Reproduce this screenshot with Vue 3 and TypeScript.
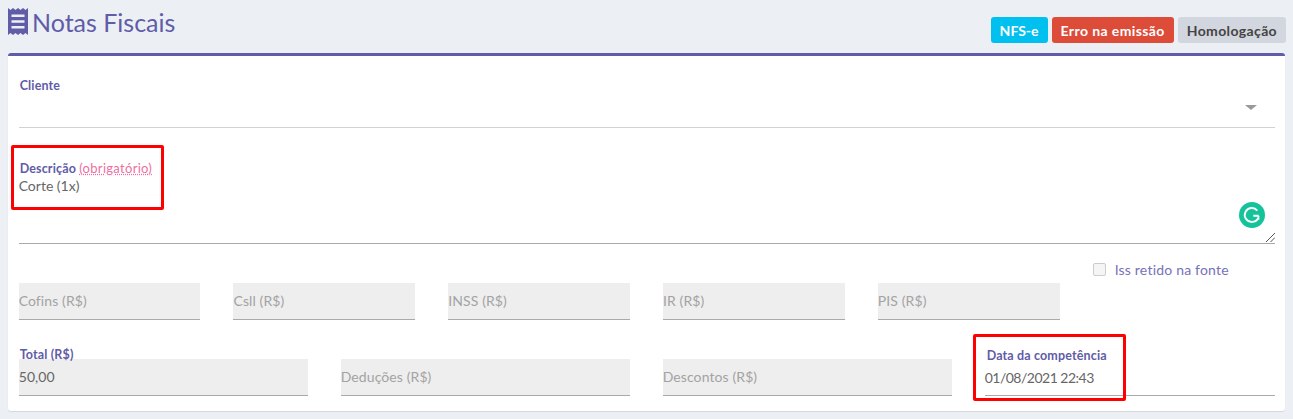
<template>
  <div class="page">
    <header class="page-header">
      <h1 class="page-title">
        <svg class="title-icon" viewBox="0 0 20 27" width="20" height="27" aria-hidden="true">
          <path
            fill-rule="evenodd"
            d="M0 0l2.500 2 2.500-2 2.500 2L10 0l2.500 2L15 0l2.500 2L20 0v27l-2.500-2-2.500 2-2.500-2-2.500 2-2.500-2L5 27l-2.500-2L0 27zM3.500 6.500v2.400h13V6.500zM3.500 12.300v2.400h13v-2.400zM3.500 18.100v2.400h13v-2.400z"
          />
        </svg>
        Notas Fiscais
      </h1>
      <div class="badges">
        <span v-for="badge in badges" :key="badge.text" class="badge" :class="badge.kind">{{ badge.text }}</span>
      </div>
    </header>

    <section class="card">
      <div class="field select-field">
        <label class="label">Cliente</label>
        <div class="select-line"><span class="caret"></span></div>
      </div>

      <div class="field text-field">
        <label class="label">Descrição <abbr class="required">(obrigatório)</abbr></label>
        <div class="textarea">
          Corte (1x)
          <svg class="resize" viewBox="0 0 9 9" width="9" height="9" aria-hidden="true">
            <path d="M0 9L9 0M4.500 9L9 4.500" stroke="#555" stroke-width="1" fill="none" />
          </svg>
        </div>
      </div>

      <div class="grid six">
        <div v-for="name in taxes" :key="name" class="input disabled placeholder">{{ name }}</div>
        <label class="check">
          <span class="box"></span>
          Iss retido na fonte
        </label>
      </div>

      <div class="grid four">
        <div class="input disabled has-label">
          <span class="label overlap">Total (R$)</span>
          50,00
        </div>
        <div class="input disabled placeholder">Deduções (R$)</div>
        <div class="input disabled placeholder">Descontos (R$)</div>
        <div class="date-field">
          <span class="label">Data da competência</span>
          <div class="date-value">01/08/2021 22:43</div>
        </div>
      </div>

      <svg class="grammarly" viewBox="0 0 26 26" width="26" height="26" aria-hidden="true">
        <circle cx="13" cy="13" r="13" fill="#15c39a" />
        <path
          d="M18.300 8.700A7 7 0 1 0 13 20a7 7 0 0 0 6-3.400M19.600 13.800h-5.300M19.400 13.800v4"
          fill="none"
          stroke="#fff"
          stroke-width="1.900"
        />
      </svg>
    </section>

    <div class="mark mark-desc"></div>
    <div class="mark mark-date"></div>
  </div>
</template>

<script setup lang="ts">
interface Badge {
  text: string;
  kind: string;
}

const badges: Badge[] = [
  { text: 'NFS-e', kind: 'info' },
  { text: 'Erro na emissão', kind: 'danger' },
  { text: 'Homologação', kind: 'muted' },
];

const taxes: string[] = ['Cofins (R$)', 'Csll (R$)', 'INSS (R$)', 'IR (R$)', 'PIS (R$)'];
</script>

<style>
html,
body {
  margin: 0;
  background: #ecf0f5;
}
</style>

<style scoped>
.page {
  position: relative;
  height: 419px;
  box-sizing: border-box;
  padding: 8px;
  background: #ecf0f5;
  font-family: Lato, 'Open Sans', sans-serif;
  overflow: hidden;
}

.page-header {
  display: flex;
  justify-content: space-between;
  height: 45px;
}

.page-title {
  display: flex;
  align-items: flex-start;
  gap: 4px;
  margin: 0;
  font-size: 25px;
  font-weight: 400;
  line-height: 29px;
  color: #605ca8;
}

.title-icon {
  fill: #605ca8;
}

.badges {
  display: flex;
  gap: 4px;
  margin: 9px -1px 0 0;
  height: 26px;
}

.badge {
  display: flex;
  align-items: center;
  padding: 0 9px;
  border-radius: 3px;
  font-size: 14px;
  font-weight: 700;
  color: #fff;
}

.info {
  background: #00c0ef;
}

.danger {
  background: #dd4b39;
  letter-spacing: 0.4px;
}

.muted {
  background: #d2d6de;
  color: #444;
  letter-spacing: 0.36px;
}

.card {
  position: relative;
  height: 358px;
  box-sizing: border-box;
  padding: 22px 10px 0 10.67px;
  background: #fff;
  border-top: 3px solid #605ca8;
  border-radius: 3px;
  box-shadow: 0 1px 1px rgba(0, 0, 0, 0.1);
}

.label {
  display: block;
  padding-left: 1px;
  font-size: 12.5px;
  font-weight: 700;
  letter-spacing: 0.15px;
  line-height: 16px;
  color: #605ca8;
}

.required {
  font-size: 13px;
  font-weight: 400;
  letter-spacing: 0.3px;
  color: #ec6f9f;
  text-decoration: underline dotted;
}

.select-field {
  height: 49px;
}

.select-line {
  position: relative;
  height: 33px;
  border-bottom: 1px solid #d2d2d2;
}

.caret {
  position: absolute;
  right: 18px;
  top: 11px;
  border-left: 6px solid transparent;
  border-right: 6px solid transparent;
  border-top: 5px solid #999;
}

.text-field {
  margin-top: 33px;
}

.textarea {
  position: relative;
  height: 66px;
  border-bottom: 1px solid #aaa;
  font-size: 14px;
  line-height: 17px;
  color: #666;
}

.resize {
  position: absolute;
  right: 0;
  bottom: 1px;
}

.grid {
  display: grid;
}

.six {
  grid-template-columns: repeat(5, 181.8px) 1fr;
  column-gap: 33px;
  margin-top: 39px;
  height: 38px;
}

.four {
  grid-template-columns: repeat(3, 289px) 1fr;
  column-gap: 33px;
  margin-top: 38px;
  height: 38px;
}

.input {
  position: relative;
  height: 36px;
  line-height: 36px;
  font-size: 14px;
  letter-spacing: 0.1px;
  color: #666;
  border-bottom: 1px solid #aaa;
}

.disabled {
  background: #eee;
}

.placeholder {
  color: #a3a3a3;
}

.overlap {
  position: absolute;
  left: 0;
  top: -12px;
  line-height: 16px;
}

.check {
  display: flex;
  align-items: center;
  gap: 9px;
  height: 14px;
  margin-top: -21px;
  font-size: 14px;
  letter-spacing: 0.2px;
  color: #7672b8;
}

.box {
  width: 11px;
  height: 11px;
  border: 1px solid #ccc;
  border-radius: 2px;
  background: #f5f5f5;
}

.date-field {
  margin-top: -11px;
  height: 48px;
  box-sizing: border-box;
  padding-left: 1px;
  border-bottom: 1px solid #aaa;
}

.date-value {
  margin-top: 5px;
  margin-left: -1px;
  font-size: 14px;
  letter-spacing: -0.5px;
  line-height: 18px;
  color: #666;
}

.grammarly {
  position: absolute;
  left: 1231px;
  top: 146px;
}

.mark {
  position: absolute;
  box-sizing: border-box;
  width: 153px;
  border: 3px solid #f00;
  border-radius: 2px;
}

.mark-desc {
  left: 11px;
  top: 145px;
  height: 65px;
}

.mark-date {
  left: 973px;
  top: 334px;
  height: 67px;
}
</style>
